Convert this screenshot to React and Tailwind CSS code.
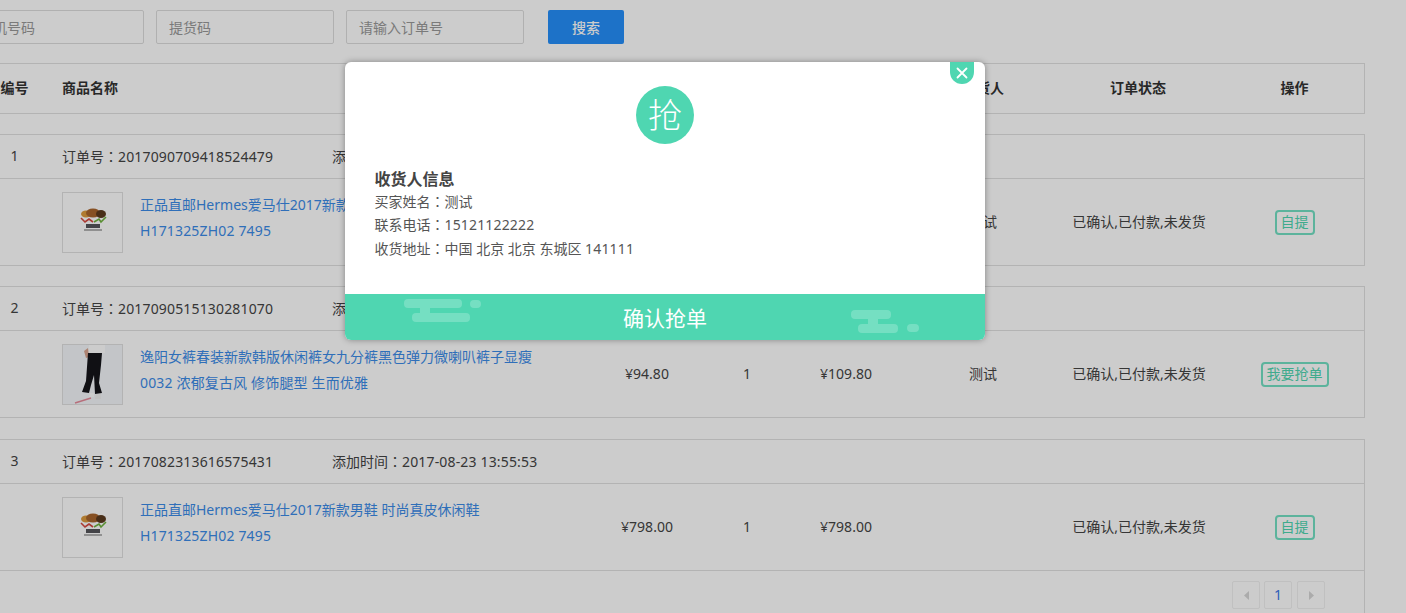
const FONT = { fontFamily: '"Noto Sans", "Noto Sans CJK SC", sans-serif' };

function Logo() {
  return (
    <svg width="34" height="34" viewBox="0 0 34 34">
      <ellipse cx="10" cy="9" rx="5" ry="3.5" fill="#dc9a3c" />
      <ellipse cx="17" cy="8" rx="7" ry="4.5" fill="#a8642c" />
      <ellipse cx="25" cy="9" rx="5" ry="4" fill="#5b3a1e" />
      <path d="M5 13 L9 17 L13 14 L17 17" fill="none" stroke="#d6493f" strokeWidth="1.6" />
      <path d="M18 17 L23 14 L25 17 L30 12" fill="none" stroke="#6fb23e" strokeWidth="1.6" />
      <rect x="10" y="19" width="14" height="4" fill="#55555a" />
      <rect x="8" y="24" width="18" height="2" fill="#b5b5b5" />
    </svg>
  );
}

function Pants() {
  return (
    <svg width="59" height="59" viewBox="0 0 59 59">
      <rect width="59" height="59" fill="#f4f7fa" />
      <path d="M26 0 H42 V8 H25 Z" fill="#ffffff" />
      <path d="M21 6 L25 3 L26 12 L23 13 Z" fill="#d9a48f" />
      <path d="M25 8 H39 L38 20 L36 38 L39 48 L32 49 L31 30 L28 40 L26 48 L19 47 L23 36 L24 22 Z" fill="#14141a" />
      <path d="M27 48 L31 48 L31 52 L26 52 Z" fill="#ffffff" />
      <path d="M33 49 L38 49 L38 54 L32 54 Z" fill="#f0f0f0" />
      <path d="M12 58 L28 53" stroke="#e58a9a" strokeWidth="1.5" />
    </svg>
  );
}

function Cols({ className = "", children }) {
  return (
    <div className={"grid grid-cols-[67px_528px_142px_58px_140px_134px_176px_137px] items-center " + className}>
      {children}
    </div>
  );
}

function Colon() {
  return <span className="font-['Noto_Sans_CJK_TC']">：</span>;
}

function Num({ children }) {
  return <span className="tracking-[0.16px]">{children}</span>;
}

function Input({ text }) {
  return (
    <div className="w-[178px] h-[34px] shrink-0 border border-[#dddddd] rounded-[2px] pl-3 pt-px flex items-center text-[#999999] text-sm whitespace-nowrap">
      {text}
    </div>
  );
}

function Order({ idx, no, time, img, l1, l2, price, qty, paid, buyer, tag, className = "", children }) {
  const wide = tag.length > 2;
  return (
    <div className={"border border-[#e0e0e0] text-[#444444] text-sm " + className}>
      <Cols className="h-[44px] pb-px border-b border-[#e0e0e0]">
        <div className="text-center">{idx}</div>
        <div className="col-span-7 pl-[14px] flex">
          <span className="w-[270px] whitespace-nowrap">订单号<Colon /><Num>{no}</Num></span>
          <span className="whitespace-nowrap">添加时间<Colon /><Num>{time}</Num></span>
        </div>
      </Cols>
      <Cols className="h-[86px]">
        <div />
        <div className="pl-[14px] flex items-center gap-[17px]">
          <div className="w-[61px] h-[61px] shrink-0 border border-[#e0e0e0] flex items-center justify-center overflow-hidden">
            {img === "pants" ? <Pants /> : <Logo />}
          </div>
          <div className="text-[#3b8be8] leading-[26px] mb-[8px]">
            <div className="whitespace-nowrap">{l1}</div>
            <div className="whitespace-nowrap"><Num>{l2}</Num></div>
          </div>
        </div>
        <div className="text-center">{price}</div>
        <div className="text-center">{qty}</div>
        <div className="text-center">{paid}</div>
        <div className="text-center">{buyer}</div>
        <div className="text-center whitespace-nowrap pl-[2px]">已确认,已付款,未发货</div>
        <div className="flex justify-center">
          <span className={"h-[25px] flex items-center justify-center border-2 border-[#74e0c4] rounded-[4px] text-[#4fd6b1] " + (wide ? "w-[68px]" : "w-[40px]")}>
            {tag}
          </span>
        </div>
      </Cols>
      {children}
    </div>
  );
}

function Page() {
  return (
    <div className="ml-[-20px] w-[1385px] pt-[10px]">
      <div className="flex gap-3 ml-[-14px]">
        <Input text="手机号码" />
        <Input text="提货码" />
        <Input text="请输入订单号" />
        <button className="ml-3 w-[76px] h-[34px] pt-px rounded-[2px] bg-[#258ffa] text-white text-sm font-medium">搜索</button>
      </div>

      <div className="mt-[19px] h-[51px] pb-px border border-[#e0e0e0] font-bold text-sm text-[#333333]">
        <Cols className="h-full">
          <div className="text-center">编号</div>
          <div className="pl-[14px]">商品名称</div>
          <div className="text-center">单价</div>
          <div className="text-center">数量</div>
          <div className="text-center">实付款</div>
          <div className="text-center">收货人</div>
          <div className="text-center">订单状态</div>
          <div className="text-center">操作</div>
        </Cols>
      </div>

      <Order className="mt-[20px]" idx="1" no="2017090709418524479" time="2017-09-07 09:41:85" img="logo"
        l1="正品直邮Hermes爱马仕2017新款男鞋 时尚真皮休闲鞋" l2="H171325ZH02 7495"
        price="¥798.00" qty="1" paid="¥798.00" buyer="测试" tag="自提" />
      <Order className="mt-[20px]" idx="2" no="2017090515130281070" time="2017-09-05 15:13:02" img="pants"
        l1="逸阳女裤春装新款韩版休闲裤女九分裤黑色弹力微喇叭裤子显瘦" l2="0032 浓郁复古风 修饰腿型 生而优雅"
        price="¥94.80" qty="1" paid="¥109.80" buyer="测试" tag="我要抢单" />
      <Order className="mt-[21px]" idx="3" no="2017082313616575431" time="2017-08-23 13:55:53" img="logo"
        l1="正品直邮Hermes爱马仕2017新款男鞋 时尚真皮休闲鞋" l2="H171325ZH02 7495"
        price="¥798.00" qty="1" paid="¥798.00" buyer="" tag="自提">
        <div className="border-t border-[#e0e0e0] pt-[10px] pb-[10px] pr-[39px] flex justify-end gap-1">
          <span className="w-[28px] h-[28px] border border-[#f0f0f0] rounded-[2px] flex items-center justify-center">
            <svg width="5" height="9" viewBox="0 0 5 9"><path d="M5 0 V9 L0 4.5 Z" fill="#d6d6d6" /></svg>
          </span>
          <span className="w-[28px] h-[28px] border border-[#f0f0f0] rounded-[2px] flex items-center justify-center text-[#3b78e8]">1</span>
          <span className="ml-[1px] w-[28px] h-[28px] border border-[#f0f0f0] rounded-[2px] flex items-center justify-center">
            <svg width="5" height="9" viewBox="0 0 5 9"><path d="M0 0 V9 L5 4.5 Z" fill="#d6d6d6" /></svg>
          </span>
        </div>
      </Order>
    </div>
  );
}

function Modal() {
  return (
    <div className="absolute left-[345px] top-[62px] w-[640px] h-[278px] bg-white rounded-[6px] shadow-[0_0_6px_rgba(0,0,0,0.35)] flex flex-col overflow-hidden">
      <div className="absolute right-[11px] top-0 w-[24px] h-[22px] bg-[#4fd6b1] rounded-b-[12px] flex items-center justify-center">
        <svg width="12" height="12" viewBox="0 0 12 12"><path d="M1.5 1.5 L10.5 10.5 M10.5 1.5 L1.5 10.5" stroke="#ffffff" strokeWidth="1.8" strokeLinecap="round" /></svg>
      </div>
      <div className="flex-1 pt-[24px]">
        <div className="mx-auto w-[58px] h-[58px] rounded-full bg-[#4fd6b1] flex items-center justify-center text-white text-[34px] font-extralight">抢</div>
        <div className="mt-[24.5px] pl-[29.5px] text-sm text-[#555555] leading-[23.5px]">
          <div className="font-bold text-[16px] leading-[21px] text-[#444444]">收货人信息</div>
          <div>买家姓名<Colon />测试</div>
          <div>联系电话<Colon /><Num>15121122222</Num></div>
          <div>收货地址<Colon />中国 北京 北京 东城区 <Num>141111</Num></div>
        </div>
      </div>
      <div className="relative h-[46px] pt-[3px] bg-[#4fd6b1] flex items-center justify-center text-white text-[21px]">
        <svg className="absolute left-0 top-0" width="640" height="46" viewBox="0 0 640 46" fill="#ffffff" fillOpacity="0.22">
          <rect x="59" y="5" width="58" height="9" rx="4" />
          <rect x="75" y="14" width="10" height="5" />
          <rect x="67" y="19" width="58" height="9" rx="4" />
          <rect x="125" y="6" width="11" height="8" rx="4" />
          <rect x="506" y="16" width="40" height="9" rx="4" />
          <rect x="523" y="25" width="10" height="5" />
          <rect x="513" y="30" width="40" height="9" rx="4" />
          <rect x="562" y="30" width="12" height="8" rx="4" />
        </svg>
        <span className="relative">确认抢单</span>
      </div>
    </div>
  );
}

export default function App() {
  return (
    <div className="relative w-[1406px] h-[613px] overflow-hidden bg-white" style={FONT}>
      <Page />
      <div className="absolute inset-0 bg-black/20" />
      <Modal />
    </div>
  );
}
